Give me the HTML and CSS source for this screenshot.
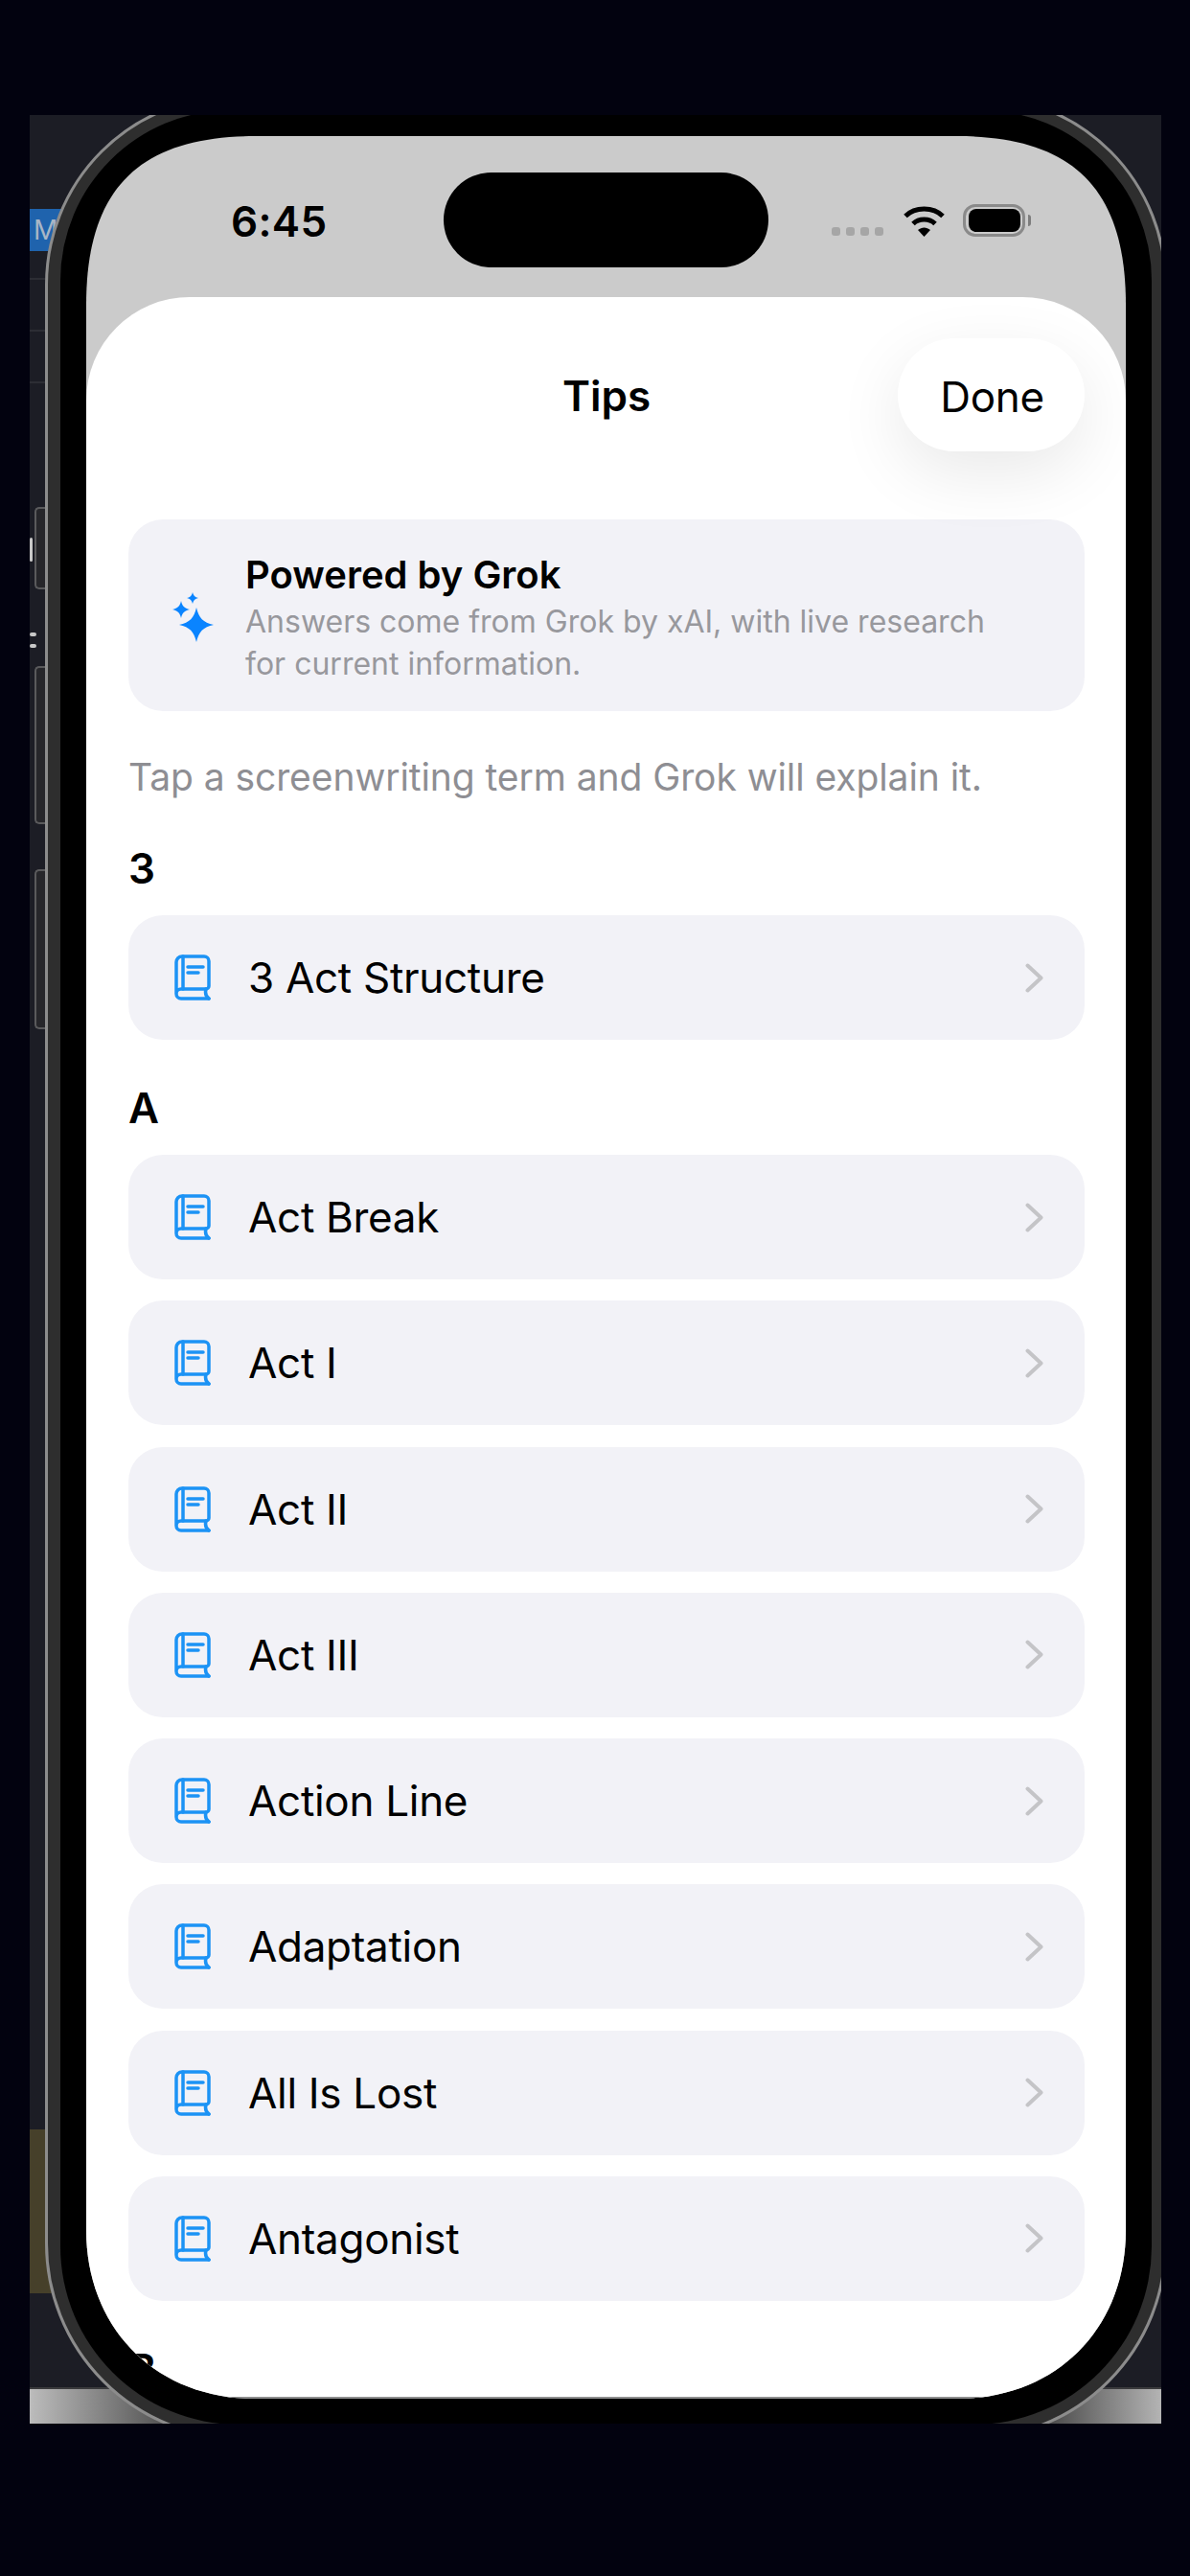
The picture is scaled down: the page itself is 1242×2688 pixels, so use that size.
FILE: index.html
```html
<!DOCTYPE html>
<html lang="en">
<head>
  <meta charset="UTF-8" />
  <meta name="viewport" content="width=device-width, initial-scale=1.0"/>
  <title>Tips</title>
  <link rel="stylesheet" href="styles.css">
</head>
<body>
  <svg class="sprites" width="0" height="0">
    <symbol id="book" viewBox="0 0 38 48">
      <path d="M2 41V8a6 6 0 0 1 6-6h23a5 5 0 0 1 5 5v26a3 3 0 0 1-3 3H7a5 5 0 0 0 0 10h29" />
      <path d="M33 36c-1 4 0 8 3 10M9 2v34M14 13h16M14 19h11" />
    </symbol>
    <symbol id="chevron" viewBox="0 0 19 31">
      <path d="M2.5 2.5 16.5 15.5 2.5 28.5" />
    </symbol>
  </svg>

  <div class="photo">
    <div class="photo-badge">M</div>
    <div class="photo-rule photo-rule-1"></div>
    <div class="photo-rule photo-rule-2"></div>
    <div class="photo-rule photo-rule-3"></div>
    <div class="photo-mark photo-mark-1"></div>
    <div class="photo-mark photo-mark-2"></div>
    <div class="photo-olive"></div>
    <div class="photo-silver"></div>

    <div class="side-key side-key-1"></div>
    <div class="side-key side-key-2"></div>
    <div class="side-key side-key-3"></div>

    <div class="phone">
      <div class="bezel">
        <div class="screen">
          <div class="status">
            <div class="time">6:45</div>
            <div class="island"></div>
            <div class="status-right">
              <div class="signal"><i></i><i></i><i></i><i></i></div>
              <svg class="wifi" width="45" height="34" viewBox="0 0 45 34">
                <path class="wifi-arc" d="M3 12.5C13 2.5 32 2.5 42 12.5" />
                <path class="wifi-arc" d="M11 20.5C17 14.5 28 14.5 34 20.5" />
                <path d="M16 27 22.5 34 29 27C25 23.500 20 23.500 16 27Z" />
              </svg>
              <div class="battery"><div class="battery-fill"></div></div>
              <div class="battery-cap"></div>
            </div>
          </div>

          <div class="sheet">
            <div class="nav">
              <div></div>
              <h1 class="nav-title">Tips</h1>
              <button class="done">Done</button>
            </div>

            <div class="grok-card">
              <svg class="sparkle" width="44" height="52" viewBox="0 0 44 52">
                <path d="M25 16C27.500 27 32 31.500 43 34 32 36.500 27.500 41 25 52 22.500 41 18 36.500 7 34 18 31.500 22.500 27 25 16Z" />
                <path d="M9 9C10.200 14.500 12.500 16.800 18 18 12.500 19.200 10.200 21.500 9 27 7.800 21.500 5.500 19.200 0 18 5.500 16.800 7.800 14.500 9 9Z" />
                <path d="M21 0C21.800 3.600 23.400 5.200 27 6 23.400 6.800 21.800 8.400 21 12 20.200 8.400 18.600 6.800 15 6 18.600 5.200 20.200 3.600 21 0Z" />
              </svg>
              <div class="grok-copy">
                <div class="grok-title">Powered by Grok</div>
                <div class="grok-text">Answers come from Grok by xAI, with live research<br>for current information.</div>
              </div>
            </div>

            <p class="hint">Tap a screenwriting term and Grok will explain it.</p>

            <h2 class="section">3</h2>
            <div class="list">
              <div class="row">
                <svg class="book"><use href="#book" /></svg>
                <span class="row-label">3 Act Structure</span>
                <svg class="chevron"><use href="#chevron" /></svg>
              </div>
            </div>

            <h2 class="section">A</h2>
            <div class="list">
              <div class="row">
                <svg class="book"><use href="#book" /></svg>
                <span class="row-label">Act Break</span>
                <svg class="chevron"><use href="#chevron" /></svg>
              </div>
              <div class="row">
                <svg class="book"><use href="#book" /></svg>
                <span class="row-label">Act I</span>
                <svg class="chevron"><use href="#chevron" /></svg>
              </div>
              <div class="row">
                <svg class="book"><use href="#book" /></svg>
                <span class="row-label">Act II</span>
                <svg class="chevron"><use href="#chevron" /></svg>
              </div>
              <div class="row">
                <svg class="book"><use href="#book" /></svg>
                <span class="row-label">Act III</span>
                <svg class="chevron"><use href="#chevron" /></svg>
              </div>
              <div class="row">
                <svg class="book"><use href="#book" /></svg>
                <span class="row-label">Action Line</span>
                <svg class="chevron"><use href="#chevron" /></svg>
              </div>
              <div class="row">
                <svg class="book"><use href="#book" /></svg>
                <span class="row-label">Adaptation</span>
                <svg class="chevron"><use href="#chevron" /></svg>
              </div>
              <div class="row">
                <svg class="book"><use href="#book" /></svg>
                <span class="row-label">All Is Lost</span>
                <svg class="chevron"><use href="#chevron" /></svg>
              </div>
              <div class="row">
                <svg class="book"><use href="#book" /></svg>
                <span class="row-label">Antagonist</span>
                <svg class="chevron"><use href="#chevron" /></svg>
              </div>
            </div>

            <h2 class="section">B</h2>
          </div>
        </div>
      </div>
    </div>
  </div>
</body>
</html>
```

FILE: styles.css
```css
html, body {
  margin: 0;
  height: 2688px;
  overflow: hidden;
}

body {
  padding: 120px 0 0 31px;
  box-sizing: border-box;
  background-color: #02020f;
  font-family: Inter, 'Liberation Sans', sans-serif;
  color: #000;
}

.sprites {
  position: absolute;
}

/* the photographed desk behind the phone */
.photo {
  position: relative;
  width: 1181px;
  height: 2409px;
  overflow: hidden;
  background-color: #1c1d25;
}

.photo-badge {
  position: absolute;
  left: 0;
  top: 98px;
  width: 40px;
  height: 44px;
  padding-left: 4px;
  background-color: #1f63ad;
  color: #a8b6c6;
  font-size: 28px;
  line-height: 44px;
}

.photo-rule {
  position: absolute;
  left: 0;
  width: 40px;
  height: 2px;
  background-color: #2c2d34;
}

.photo-rule-1 { top: 170px; }
.photo-rule-2 { top: 224px; }
.photo-rule-3 { top: 278px; }

.photo-mark {
  position: absolute;
  left: 0;
  background-color: #c8c8c8;
  border-radius: 2px;
}

.photo-mark-1 { top: 441px; width: 3px; height: 25px; }
.photo-mark-2 { top: 540px; width: 7px; height: 4px; box-shadow: 0 12px 0 #c8c8c8; }

.photo-olive {
  position: absolute;
  left: 0;
  top: 2102px;
  width: 30px;
  height: 171px;
  background-color: #46402a;
}

.photo-silver {
  position: absolute;
  left: 0;
  right: 0;
  bottom: 0;
  height: 36px;
  border-top: 2px solid #3a3a3c;
  background: linear-gradient(90deg, #bcbcbc 0, #4a4a4a 13%, #333 50%, #4a4a4a 90%, #b4b4b4 100%);
}

.side-key {
  position: absolute;
  left: 5px;
  width: 14px;
  box-sizing: border-box;
  background-color: #26262a;
  border: 2px solid #5a5a5c;
  border-right: none;
  border-radius: 5px 0 0 5px;
}

.side-key-1 { top: 409px; height: 86px; }
.side-key-2 { top: 575px; height: 165px; }
.side-key-3 { top: 787px; height: 167px; }

/* phone frame: steel rim, then black bezel, then the screen */
.phone {
  position: absolute;
  left: 16px;
  top: -21px;
  width: 1171px;
  height: 2447px;
  box-sizing: border-box;
  padding: 13px;
  background-color: #2e2e2e;
  border: 3px solid #8c8c8c;
  border-radius: 198px 198px 205px 205px;
}

.bezel {
  height: 100%;
  box-sizing: border-box;
  padding: 27px;
  background-color: #000;
  border-radius: 178px 178px 186px 186px;
}

/* continuous corners, a plain border-radius comes out too round here */
.screen {
  display: flex;
  flex-direction: column;
  height: 100%;
  overflow: hidden;
  background-color: #cbcbcb;
  clip-path: path("M0 176C0 55 55 0 176 0H909C1030 0 1085 55 1085 176V2185C1085 2288 1012 2361 909 2361H176C73 2361 0 2288 0 2185Z");
}

/* status bar */
.status {
  display: grid;
  grid-template-columns: 373px 339px 1fr;
  flex: none;
  height: 168px;
  padding-top: 38px;
  box-sizing: border-box;
}

.time {
  padding: 29px 0 0 151px;
  font-size: 44px;
  line-height: 44px;
  font-weight: 560;
  letter-spacing: 0.3px;
}

.island {
  height: 99px;
  background-color: #000;
  border-radius: 50px;
}

.status-right {
  display: flex;
  align-items: center;
  height: 99px;
  padding-left: 66px;
}

.signal {
  display: flex;
  gap: 6px;
  margin: 24px 20px 0 0;
}

.signal i {
  width: 9px;
  height: 9px;
  background-color: #a6a6a6;
  border-radius: 3px;
}

.wifi {
  margin-right: 18px;
}

.wifi-arc {
  fill: none;
  stroke: #000;
  stroke-width: 5px;
}

.battery {
  width: 65px;
  height: 34px;
  box-sizing: border-box;
  padding: 2px 2px 2px 3px;
  border: 3px solid #8a8a8a;
  border-radius: 13px;
}

.battery-fill {
  height: 100%;
  background-color: #000;
  border-radius: 8px;
}

.battery-cap {
  width: 3px;
  height: 12px;
  margin-left: 3px;
  background-color: #7d7d7d;
  border-radius: 0 4px 4px 0;
}

/* sheet */
.sheet {
  flex: 1;
  min-height: 0;
  padding: 0 43px 0 44px;
  overflow: hidden;
  background-color: #fff;
  border-bottom: 2px solid #8f8f8f;
  border-radius: 108px 108px 0 0;
}

.nav {
  display: grid;
  grid-template-columns: 1fr auto 1fr;
  align-items: center;
  height: 118px;
  padding: 43px 0 71px;
}

.nav-title {
  margin: 0;
  padding-top: 2px;
  font-size: 44px;
  font-weight: 560;
}

.done {
  justify-self: end;
  width: 195px;
  height: 118px;
  padding: 3px 0 0 2px;
  border: none;
  border-radius: 59px;
  background-color: #fff;
  box-shadow: 0 22px 70px rgba(0, 0, 0, 0.09);
  font-family: inherit;
  font-size: 44px;
  letter-spacing: -0.3px;
  color: #000;
}

.grok-card {
  display: flex;
  align-items: center;
  gap: 32px;
  height: 200px;
  padding-left: 46px;
  background-color: #f2f2f7;
  border-radius: 36px;
}

.sparkle {
  flex: none;
  fill: #0a84ff;
  margin-top: 4px;
}

.grok-copy {
  padding-top: 7px;
}

.grok-title {
  font-size: 40px;
  line-height: 48px;
  font-weight: 560;
}

.grok-text {
  margin-top: 3px;
  font-size: 32px;
  line-height: 44px;
  color: #98989d;
}

.hint {
  margin: 45px 0 0;
  font-size: 39px;
  line-height: 48px;
  letter-spacing: -0.08px;
  color: #8e8e93;
}

.section {
  margin: 45px 0 23px;
  font-size: 44px;
  line-height: 52px;
  font-weight: 560;
}

.list {
  display: flex;
  flex-direction: column;
  gap: 22.25px;
}

.row {
  display: flex;
  align-items: center;
  height: 130px;
  padding: 0 43px 0 48px;
  background-color: #f2f2f7;
  border-radius: 36px;
}

.book {
  flex: none;
  width: 38px;
  height: 48px;
  fill: none;
  stroke: #1c93f5;
  stroke-width: 3.5px;
  stroke-linecap: round;
  stroke-linejoin: round;
}

.row-label {
  flex: 1;
  margin-left: 39px;
  font-size: 44px;
  letter-spacing: -0.3px;
}

.chevron {
  flex: none;
  width: 19px;
  height: 31px;
  fill: none;
  stroke: #c4c4c7;
  stroke-width: 4px;
  stroke-linecap: round;
  stroke-linejoin: round;
}
```
